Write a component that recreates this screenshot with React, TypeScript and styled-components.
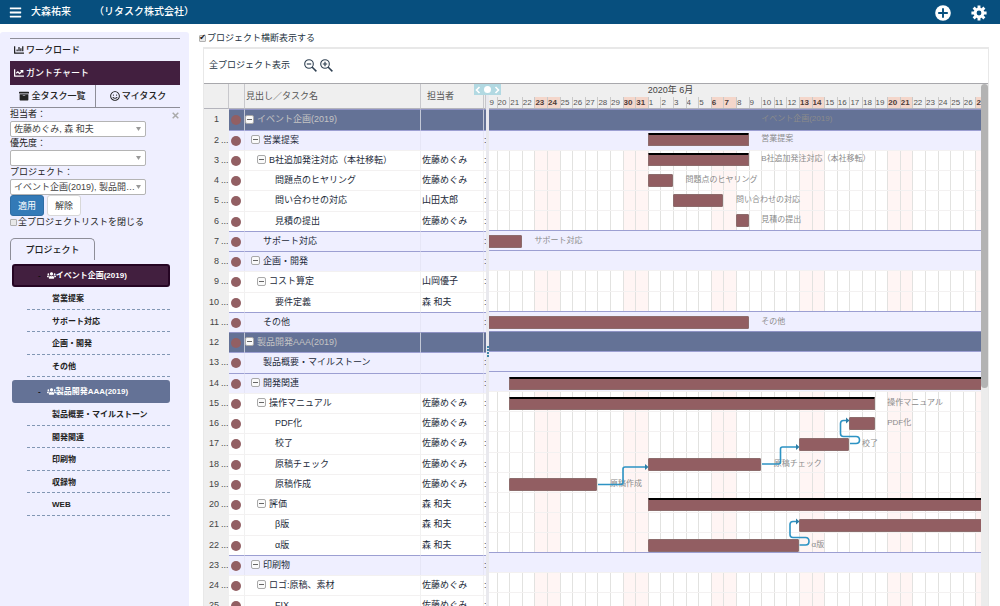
import React from 'react';
import styled, { createGlobalStyle, css } from 'styled-components';
import { FaArchive, FaBars, FaChartBar, FaChartLine, FaRegSmile, FaUsers } from 'react-icons/fa';

type Kind = 'project' | 'heading' | 'task';

interface Task {
  name: string;
  depth: number;
  kind: Kind;
  open?: boolean;
  owner?: string;
  start?: number;
  end?: number;
  summary?: boolean;
}

/* start and end are day offsets from 19 May 2020 */
const DAYS = 40;

const tasks: Task[] = [
  { name: 'イベント企画(2019)', depth: 0, kind: 'project', open: true, end: 21 },
  { name: '営業提案', depth: 1, kind: 'heading', open: true, start: 13, end: 21, summary: true },
  { name: 'B社追加発注対応（本社移転）', depth: 2, kind: 'task', open: true, owner: '佐藤めぐみ', start: 13, end: 21, summary: true },
  { name: '問題点のヒヤリング', depth: 3, kind: 'task', owner: '佐藤めぐみ', start: 13, end: 15 },
  { name: '問い合わせの対応', depth: 3, kind: 'task', owner: '山田太郎', start: 15, end: 19 },
  { name: '見積の提出', depth: 3, kind: 'task', owner: '佐藤めぐみ', start: 20, end: 21 },
  { name: 'サポート対応', depth: 1, kind: 'heading', start: 0, end: 3 },
  { name: '企画・開発', depth: 1, kind: 'heading', open: true },
  { name: 'コスト算定', depth: 2, kind: 'task', open: true, owner: '山岡優子' },
  { name: '要件定義', depth: 3, kind: 'task', owner: '森 和夫' },
  { name: 'その他', depth: 1, kind: 'heading', start: 0, end: 21 },
  { name: '製品開発AAA(2019)', depth: 0, kind: 'project', open: true },
  { name: '製品概要・マイルストーン', depth: 1, kind: 'heading' },
  { name: '開発関連', depth: 1, kind: 'heading', open: true, start: 2, end: 40, summary: true },
  { name: '操作マニュアル', depth: 2, kind: 'task', open: true, owner: '佐藤めぐみ', start: 2, end: 31, summary: true },
  { name: 'PDF化', depth: 3, kind: 'task', owner: '佐藤めぐみ', start: 29, end: 31 },
  { name: '校了', depth: 3, kind: 'task', owner: '佐藤めぐみ', start: 25, end: 29 },
  { name: '原稿チェック', depth: 3, kind: 'task', owner: '佐藤めぐみ', start: 13, end: 22 },
  { name: '原稿作成', depth: 3, kind: 'task', owner: '佐藤めぐみ', start: 2, end: 9 },
  { name: '評価', depth: 2, kind: 'task', open: true, owner: '森 和夫', start: 13, end: 40, summary: true },
  { name: 'β版', depth: 3, kind: 'task', owner: '森 和夫', start: 25, end: 40 },
  { name: 'α版', depth: 3, kind: 'task', owner: '森 和夫', start: 13, end: 25 },
  { name: '印刷物', depth: 1, kind: 'heading', open: true },
  { name: 'ロゴ:原稿、素材', depth: 2, kind: 'task', open: true, owner: '佐藤めぐみ' },
  { name: 'FIX', depth: 3, kind: 'task', owner: '佐藤めぐみ' },
];

const days = Array.from({ length: DAYS }, (_, i) => ({
  label: i < 13 ? i + 19 : i - 12,
  weekend: i % 7 === 4 || i % 7 === 5,
}));

const projects = [
  { name: 'イベント企画(2019)', active: true, items: ['営業提案', 'サポート対応', '企画・開発', 'その他'] },
  { name: '製品開発AAA(2019)', active: false, items: ['製品概要・マイルストーン', '開発関連', '印刷物', '収録物', 'WEB'] },
];

const Global = createGlobalStyle`
  * { box-sizing: border-box; }
  body {
    margin: 0;
    background: #fff;
    color: #263442;
    font: 9px/12px "Liberation Sans", "Noto Sans CJK JP", sans-serif;
  }
  button, input, select { font: inherit; color: inherit; margin: 0; }
  a { color: inherit; text-decoration: none; }
`;

const Page = styled.div`
  display: flex;
  flex-direction: column;
  height: 100vh;
  overflow: hidden;
`;

const TopBar = styled.header`
  display: flex;
  align-items: center;
  flex: none;
  height: 24px;
  padding: 0 13px 0 9px;
  background: #074f7e;
  color: #fff;
  font-size: 10px;
  font-weight: 500;
`;

const BarButton = styled.button<{ $size: number }>`
  display: flex;
  padding: 0;
  border: 0;
  background: none;
  color: #fff;
  svg { width: ${p => p.$size}px; height: ${p => p.$size}px; }
`;

const UserName = styled.span`
  margin-left: 9px;
`;

const Company = styled.span`
  margin: 0 auto 0 23px;
`;

const BarActions = styled.div`
  display: flex;
  align-items: center;
  gap: 20px;
  padding-top: 2px;
`;

const Body = styled.div`
  display: flex;
  flex: 1;
  min-height: 0;
  padding: 8px 11px 0 0;
`;

const Sidebar = styled.aside`
  flex: none;
  width: 189px;
  padding: 6px 9px 0 10px;
  border-radius: 3px 3px 0 0;
  background: #efefff;
  color: #222;
`;

const Nav = styled.nav`
  border-top: 1px solid #8e8e98;
  border-bottom: 1px solid #8e8e98;
`;

const NavLink = styled.a<{ $active?: boolean }>`
  display: flex;
  align-items: center;
  gap: 2px;
  height: ${p => (p.$active ? 24 : 22)}px;
  padding-left: 4px;
  font-weight: 500;
  svg { width: 10px; height: 10px; }
  ${p => p.$active && css`
    background: #421f3f;
    color: #fff;
  `}
`;

const NavSplit = styled.div`
  display: grid;
  grid-template-columns: 1fr 1fr;
  a { justify-content: center; padding: 0; }
  a + a { border-left: 1px solid #8e8e98; }
`;

const Filters = styled.form`
  position: relative;
`;

const FieldLabel = styled.label`
  display: block;
  height: 13px;
  line-height: 13px;
`;

const SelectWrap = styled.div`
  position: relative;
  width: 136px;
  svg {
    position: absolute;
    right: 5px;
    top: 6px;
  }
`;

const Select = styled.select`
  display: block;
  appearance: none;
  width: 100%;
  height: 16px;
  padding: 0 8px 0 3px;
  border: 1px solid #b4b4b4;
  border-radius: 2px;
  background: #fff;
  color: #444;
  text-overflow: ellipsis;
`;

const ClearButton = styled.button`
  position: absolute;
  right: 1px;
  top: 4px;
  display: flex;
  padding: 0;
  border: 0;
  background: none;
`;

const ButtonRow = styled.div`
  display: flex;
  gap: 3px;
`;

const Button = styled.button<{ $primary?: boolean }>`
  width: 34px;
  height: 21px;
  padding: 0;
  border: 1px solid ${p => (p.$primary ? '#2e6da4' : '#d8d8d8')};
  border-radius: 3px;
  background: ${p => (p.$primary ? '#337ab7' : '#fff')};
  color: ${p => (p.$primary ? '#fff' : '#333')};
`;

const CheckLabel = styled.label`
  display: flex;
  align-items: center;
  gap: 1px;
  height: 12px;
`;

const Checkbox = styled.input`
  appearance: none;
  display: flex;
  align-items: center;
  justify-content: center;
  flex: none;
  width: 7px;
  height: 7px;
  border: 1px solid #b0b0b0;
  border-radius: 1px;
  background: #e8e8e8;
  &:checked::after {
    content: "✔";
    color: #111;
    font: 8px/8px "DejaVu Sans", sans-serif;
  }
`;

const Tab = styled.button`
  display: block;
  width: 85px;
  height: 22px;
  margin: 10px 0 4px;
  padding: 0;
  border: 1px solid #8e8e98;
  border-bottom: 0;
  border-radius: 5px 5px 0 0;
  background: none;
  font-weight: 500;
`;

const ProjectLink = styled.a<{ $active: boolean }>`
  display: flex;
  align-items: center;
  height: 23px;
  margin: 0 10px 0 2px;
  padding-left: 24px;
  border: 2px solid ${p => (p.$active ? '#250523' : '#647296')};
  border-radius: 3px;
  background: ${p => (p.$active ? '#421f3f' : '#647296')};
  color: #fff;
  font-size: 8px;
  font-weight: bold;
  svg { width: 9px; height: 9px; margin-left: 6px; }
`;

const Dash = styled.span`
  color: #111;
`;

const ItemList = styled.ul`
  margin: 0 10px 3px 17px;
  padding: 0;
  list-style: none;
  font-size: 8px;
  font-weight: bold;
  li {
    height: 23px;
    padding: 2px 0 0 25px;
    border-bottom: 1px dashed #8297b4;
    line-height: 20px;
  }
  li:nth-child(even) { height: 22px; }
`;

const Main = styled.main`
  display: flex;
  flex-direction: column;
  flex: 1;
  min-width: 0;
  padding-left: 14px;
  > ${CheckLabel} { margin: 0 0 3px -4px; }
`;

const Panel = styled.section`
  display: flex;
  flex-direction: column;
  flex: 1;
  min-height: 0;
  border: 1px solid #e8e8e8;
  border-width: 2px 1px 0;
`;

const Toolbar = styled.div`
  display: flex;
  align-items: center;
  gap: 3px;
  flex: none;
  height: 34px;
  padding: 0 0 2px 5px;
`;

const ToolbarTitle = styled.span`
  margin-right: 11px;
`;

const ZoomButton = styled.button`
  display: flex;
  padding: 0;
  border: 0;
  background: none;
`;

const Gantt = styled.div`
  position: relative;
  display: flex;
  flex: 1;
  min-height: 0;
  overflow: hidden;
  border-top: 1px solid #a8a8ac;
`;

const Table = styled.table`
  flex: none;
  align-self: flex-start;
  width: 282px;
  table-layout: fixed;
  border-spacing: 0;
  th, td {
    padding: 0;
    overflow: hidden;
    white-space: nowrap;
  }
  th {
    height: 25px;
    padding-left: 1px;
    border-right: 1px solid #c8c8cc;
    border-bottom: 1px solid #b4b4bc;
    background: #efefef;
    color: #555;
    font-weight: normal;
    text-align: left;
  }
  th:nth-child(4) { padding-left: 6px; }
`;

const rowColors = {
  project: { bg: '#647296', line: '#8f93c4', cell: '#c3c8d6', text: '#c4c4c4' },
  heading: { bg: '#efefff', line: '#9c9fd2', cell: '#e6e6f6', text: '#1d2b3a' },
  task: { bg: '#fff', line: '#f3f1f1', cell: '#f1f1f1', text: '#1d2b3a' },
};

const Row = styled.tr<{ $kind: Kind }>`
  height: 20px;
  color: ${p => rowColors[p.$kind].text};
  &:nth-child(4n + 1) { height: 21px; }
  td {
    padding-bottom: 2px;
    border-top: 1px solid ${p => rowColors[p.$kind].line};
    border-right: 1px solid ${p => rowColors[p.$kind].cell};
    background: ${p => rowColors[p.$kind].bg};
  }
  td:first-child {
    border-color: #efefef;
    background: #efefef;
    color: #444;
  }
  td:nth-child(4) { padding-left: 1px; }
  td:last-child { border-right: 0; color: #444; }
`;

const RowNumber = styled.div`
  display: grid;
  grid-template-columns: 15px 8px;
  gap: 2px;
  text-align: right;
  span + span { text-align: left; }
`;

const StatusDot = styled.div`
  width: 10px;
  height: 10px;
  margin: 2px 0 0 2px;
  border-radius: 5px;
  background: #925f63;
`;

const TaskName = styled.div<{ $depth: number }>`
  display: flex;
  align-items: center;
  gap: 3px;
  padding-left: ${p => p.$depth * 6}px;
`;

const Toggle = styled.button<{ $hidden: boolean }>`
  display: flex;
  align-items: center;
  justify-content: center;
  flex: none;
  width: 9px;
  height: 9px;
  padding: 0;
  border: 1px solid #a9a9a9;
  border-radius: 2px;
  background: #fafafa;
  visibility: ${p => (p.$hidden ? 'hidden' : 'visible')};
  &::after {
    content: "";
    width: 5px;
    height: 1px;
    background: #666;
  }
`;

const Splitter = styled.div`
  display: flex;
  flex-direction: column;
  align-items: center;
  gap: 1px;
  flex: none;
  width: 3px;
  padding-top: 262px;
  background: #e9e9ee;
  i {
    width: 2px;
    height: 2px;
    background: #3f86a8;
  }
`;

const SplitHandle = styled.div`
  position: absolute;
  left: 270px;
  top: 0;
  display: flex;
  align-items: center;
  justify-content: space-between;
  width: 27px;
  height: 11px;
  background: #b2d9e2;
`;

const HandleButton = styled.button`
  display: flex;
  padding: 0 1px;
  border: 0;
  background: none;
`;

const HandleKnob = styled.span`
  width: 7px;
  height: 7px;
  border-radius: 50%;
  background: #fff;
`;

const Chart = styled.div`
  flex: 1;
  min-width: 0;
  overflow: hidden;
`;

const Plane = styled.div`
  width: calc(100% + 12px);
  margin-left: -5px;
`;

const dayGrid = css`
  display: grid;
  grid-template-columns: repeat(${DAYS}, minmax(0, 1fr));
`;

const MonthRow = styled.div`
  ${dayGrid}
  height: 13px;
  background: #efefef;
  color: #444;
  span {
    grid-column: 14 / span 8;
    white-space: nowrap;
  }
`;

const DayRow = styled.div`
  ${dayGrid}
  height: 12px;
  border-bottom: 1px solid #b4b4bc;
  background: #efefef;
`;

const DayCell = styled.span<{ $weekend: boolean }>`
  overflow: hidden;
  border-left: 1px solid #c9c9c9;
  background: ${p => (p.$weekend ? '#f4d6ca' : 'none')};
  color: ${p => (p.$weekend ? '#4d3b38' : '#555')};
  font-size: 8px;
  font-weight: ${p => (p.$weekend ? 'bold' : 'normal')};
  line-height: 12px;
`;

const Canvas = styled.div`
  display: grid;
  > * { grid-area: 1 / 1; }
`;

const DayColumns = styled.div`
  ${dayGrid}
`;

const DayColumn = styled.div<{ $weekend: boolean }>`
  border-left: 1px solid #e2e2e0;
  background: ${p => (p.$weekend ? '#fff5f4' : '#fff')};
`;

const StripeRow = styled.div<{ $kind: Kind }>`
  height: 20px;
  border-top: 1px solid ${p => rowColors[p.$kind].line};
  background: ${p => (p.$kind === 'task' ? 'none' : rowColors[p.$kind].bg)};
  &:nth-child(8n + 1) { height: 21px; }
`;

const BarRow = styled.div`
  ${dayGrid}
  height: 20px;
  padding-top: 4px;
  &:nth-child(10n + 3), &:nth-child(10n + 6), &:nth-child(10n) { height: 21px; }
`;

const Bar = styled.div<{ $from: number; $to: number; $summary?: boolean }>`
  grid-row: 1;
  grid-column: ${p => p.$from + 1} / ${p => p.$to + 1};
  height: 13px;
  border: 1px solid #8d6c6c;
  border-top: ${p => (p.$summary ? '2px solid #000' : '1px solid #8d6c6c')};
  border-radius: 1px;
  background: #925e62;
`;

const BarLabel = styled.span<{ $at: number }>`
  grid-row: 1;
  grid-column: ${p => p.$at + 1} / span 1;
  color: #8b8b8b;
  font-size: 8px;
  line-height: 12px;
  white-space: nowrap;
`;

const Links = styled.svg`
  width: 100%;
  height: 497px;
  fill: none;
  stroke: #2d93c4;
  stroke-width: 2;
`;

const ScrollTrack = styled.div`
  flex: none;
  width: 7px;
  background: #ececec;
`;

const ScrollThumb = styled.div`
  height: 304px;
  border-radius: 4px;
  background: #b3b3b3;
`;

function FilterSelect({ id, label, value }: { id: string; label: string; value: string }) {
  return (
    <>
      <FieldLabel htmlFor={id}>{label}</FieldLabel>
      <SelectWrap>
        <Select id={id} defaultValue={value}>
          <option value={value}>{value}</option>
        </Select>
        <svg width="5" height="4" viewBox="0 0 5 4"><path d="M0 0h5L2.500 4z" fill="#999" /></svg>
      </SelectWrap>
    </>
  );
}

function AddIcon() {
  return (
    <svg viewBox="0 0 16 16">
      <circle cx="8" cy="8" r="7.800" fill="#fff" />
      <path d="M8 3.200v9.600M3.200 8h9.600" stroke="#074f7e" strokeWidth="1.900" />
    </svg>
  );
}

function GearIcon() {
  return (
    <svg viewBox="0 0 16 16" fill="none" stroke="#fff">
      <circle cx="8" cy="8" r="3.900" strokeWidth="3" />
      {[0, 45, 90, 135].map(a => (
        <path key={a} d="M8 .4v3M8 12.600v3" strokeWidth="2.900" transform={`rotate(${a} 8 8)`} />
      ))}
    </svg>
  );
}

function ZoomIcon({ plus }: { plus?: boolean }) {
  return (
    <svg width="13" height="13" viewBox="0 0 13 13" fill="none" stroke="#2f4052">
      <circle cx="5" cy="5" r="4.300" strokeWidth="1.100" />
      <path d={plus ? 'M2.800 5h4.400M5 2.800v4.400' : 'M2.800 5h4.400'} strokeWidth="1.200" />
      <path d="M8 8l4.400 4.400" strokeWidth="1.500" />
    </svg>
  );
}

function Chevron({ right }: { right?: boolean }) {
  return (
    <svg width="6" height="8" viewBox="0 0 6 8" fill="none" stroke="#fff" strokeWidth="1.600">
      <path d={right ? 'M1.500 1l3 3-3 3' : 'M4.500 1l-3 3 3 3'} />
    </svg>
  );
}

function SidePanel() {
  return (
    <Sidebar>
      <Nav>
        <NavLink href="#workload"><FaChartBar />ワークロード</NavLink>
        <NavLink href="#gantt" $active><FaChartLine />ガントチャート</NavLink>
        <NavSplit>
          <NavLink href="#all"><FaArchive />全タスク一覧</NavLink>
          <NavLink href="#mine"><FaRegSmile />マイタスク</NavLink>
        </NavSplit>
      </Nav>
      <Filters>
        <FilterSelect id="owner" label="担当者：" value="佐藤めぐみ, 森 和夫" />
        <FilterSelect id="priority" label="優先度：" value="" />
        <FilterSelect id="project" label="プロジェクト：" value="イベント企画(2019), 製品開発AAA(2019)" />
        <ClearButton type="button" aria-label="閉じる">
          <svg width="7" height="7" viewBox="0 0 7 7" stroke="#aaa" strokeWidth="1.500"><path d="M.7.7l5.600 5.600M6.300.7L.7 6.300" /></svg>
        </ClearButton>
        <ButtonRow>
          <Button type="button" $primary>適用</Button>
          <Button type="button">解除</Button>
        </ButtonRow>
        <CheckLabel><Checkbox type="checkbox" />全プロジェクトリストを閉じる</CheckLabel>
      </Filters>
      <Tab type="button">プロジェクト</Tab>
      {projects.map(p => (
        <React.Fragment key={p.name}>
          <ProjectLink href="#project" $active={p.active}><Dash>-</Dash><FaUsers />{p.name}</ProjectLink>
          <ItemList>
            {p.items.map(i => <li key={i}><a href="#item">{i}</a></li>)}
          </ItemList>
        </React.Fragment>
      ))}
    </Sidebar>
  );
}

function TaskTable() {
  return (
    <Table>
      <colgroup>
        <col width="25" /><col width="16" /><col width="176" /><col width="63" /><col width="2" />
      </colgroup>
      <thead>
        <tr><th /><th /><th>見出し／タスク名</th><th>担当者</th><th /></tr>
      </thead>
      <tbody>
        {tasks.map((t, i) => (
          <Row key={t.name} $kind={t.kind}>
            <td><RowNumber><span>{i + 1}</span>{t.kind !== 'project' && <span>...</span>}</RowNumber></td>
            <td><StatusDot /></td>
            <td>
              <TaskName $depth={t.depth}>
                <Toggle type="button" aria-label="折りたたむ" $hidden={!t.open} />
                {t.name}
              </TaskName>
            </td>
            <td>{t.owner}</td>
            <td>{t.kind !== 'project' && ':'}</td>
          </Row>
        ))}
      </tbody>
    </Table>
  );
}

function Timeline() {
  return (
    <Chart>
      <Plane>
        <MonthRow><span>2020年 6月</span></MonthRow>
        <DayRow>
          {days.map((d, i) => <DayCell key={i} $weekend={d.weekend}>{d.label}</DayCell>)}
        </DayRow>
        <Canvas>
          <DayColumns>
            {days.map((d, i) => <DayColumn key={i} $weekend={d.weekend} />)}
          </DayColumns>
          <div>
            {tasks.map(t => <StripeRow key={t.name} $kind={t.kind} />)}
          </div>
          <div>
            {tasks.map(t => (
              <BarRow key={t.name}>
                {t.start !== undefined && <Bar $from={t.start} $to={t.end!} $summary={t.summary} />}
                {t.end !== undefined && t.end < DAYS && <BarLabel $at={t.end + 1}>{t.name}</BarLabel>}
              </BarRow>
            ))}
          </div>
          <Links viewBox="484 109 504 497" preserveAspectRatio="none">
            <g strokeWidth="1.600">
              <path d="M598 484.500H621q2 0 2-2V469q0-2 2-2H645" />
              <path d="M762 464H778.500q2 0 2-2V449q0-2 2-2H797" />
              <path d="M850 443.500H856q3.500 0 3.500-3.500T856 436.500H843.500q-3 0-3-3V423.500q0-3 3-3H847" />
              <path d="M799.500 545H805.500q3.500 0 3.500-3.700T805.500 537.500H793q-3 0-3-3V524.500q0-3 3-3H797" />
            </g>
            <path d="M645 464l3.500 3-3.500 3zM796 444l3.500 3-3.500 3zM846 417.500l3.500 3-3.500 3zM796 518.500l3.500 3-3.500 3z" fill="#2d7fa8" stroke="none" />
          </Links>
        </Canvas>
      </Plane>
    </Chart>
  );
}

export default function App() {
  return (
    <Page>
      <Global />
      <TopBar>
        <BarButton $size={13} aria-label="メニュー"><FaBars /></BarButton>
        <UserName>大森祐来</UserName>
        <Company>（リタスク株式会社）</Company>
        <BarActions>
          <BarButton $size={16} aria-label="追加"><AddIcon /></BarButton>
          <BarButton $size={16} aria-label="設定"><GearIcon /></BarButton>
        </BarActions>
      </TopBar>
      <Body>
        <SidePanel />
        <Main>
          <CheckLabel><Checkbox type="checkbox" defaultChecked />プロジェクト横断表示する</CheckLabel>
          <Panel>
            <Toolbar>
              <ToolbarTitle>全プロジェクト表示</ToolbarTitle>
              <ZoomButton type="button" aria-label="縮小"><ZoomIcon /></ZoomButton>
              <ZoomButton type="button" aria-label="拡大"><ZoomIcon plus /></ZoomButton>
            </Toolbar>
            <Gantt>
              <TaskTable />
              <Splitter><i /><i /><i /><i /></Splitter>
              <Timeline />
              <ScrollTrack><ScrollThumb /></ScrollTrack>
              <SplitHandle>
                <HandleButton type="button" aria-label="左へ"><Chevron /></HandleButton>
                <HandleKnob />
                <HandleButton type="button" aria-label="右へ"><Chevron right /></HandleButton>
              </SplitHandle>
            </Gantt>
          </Panel>
        </Main>
      </Body>
    </Page>
  );
}
